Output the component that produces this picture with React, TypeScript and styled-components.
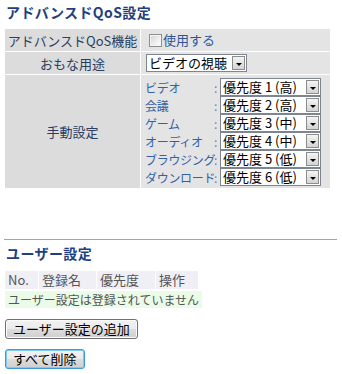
import React from "react";
import styled, { createGlobalStyle } from "styled-components";

const Global = createGlobalStyle`
  html, body { margin: 0; padding: 0; background: #fff; }
  body {
    font-family: "Noto Sans CJK JP", "Noto Sans", sans-serif;
    font-size: 13px;
    color: #333;
  }
`;

const Page = styled.div`
  width: 342px;
  height: 374px;
  overflow: hidden;
  padding-top: 3px;
  box-sizing: border-box;
`;

const Title = styled.h2`
  margin: 0 0 0 6px;
  height: 25px;
  font-size: 14px;
  line-height: 18px;
  font-weight: bold;
  letter-spacing: 0.4px;
  color: #1f3f7f;
`;

const SettingsGrid = styled.div`
  margin-left: 4px;
  display: grid;
  grid-template-columns: 135px 189px;
  grid-template-rows: 22px 22px 113px;
  gap: 1px;
  padding: 1px;
  width: max-content;
  background: #fff;
`;

const LabelCell = styled.div`
  background: #dcdcdc;
  color: #2a3d62;
  font-size: 13px;
  display: flex;
  align-items: center;
  justify-content: center;
  white-space: nowrap;
`;

const ValueCell = styled.div<{ $pad?: number }>`
  background: #e4e4e4;
  display: flex;
  align-items: center;
  padding-left: ${(p) => p.$pad ?? 5}px;
  box-sizing: border-box;
`;

const Check = styled.input`
  appearance: none;
  margin: 0 1px 0 3px;
  width: 13px;
  height: 13px;
  box-sizing: border-box;
  border: 1px solid #8e8f8f;
  background: linear-gradient(135deg, #d2d2d2 0%, #f4f4f4 70%, #fff 100%);
  box-shadow: inset 0 0 0 1px #f4f4f4;
`;

const CheckText = styled.label`
  color: #2f5597;
  font-size: 13px;
  line-height: 16px;
`;

const SelectBox = styled.span<{ $w: number }>`
  display: inline-flex;
  align-items: center;
  width: ${(p) => p.$w}px;
  height: 18px;
  box-sizing: border-box;
  border: 1px solid #7f8590;
  background: #fff;
`;

const NativeSelect = styled.select`
  appearance: none;
  -webkit-appearance: none;
  border: 0;
  outline: none;
  background: transparent;
  font-family: inherit;
  font-size: 13px;
  color: #000;
  flex: 1;
  min-width: 0;
  padding: 0 0 0 2px;
  height: 16px;
  line-height: 16px;
`;

const Arrow = styled.span`
  width: 13px;
  height: 14px;
  margin-right: 1px;
  box-sizing: border-box;
  border: 1px solid #8c8c8c;
  background: linear-gradient(#f4f4f4, #d4d4d4);
  display: flex;
  align-items: flex-end;
  justify-content: center;
  padding-bottom: 3px;
  &::after {
    content: "";
    border-left: 3.5px solid transparent;
    border-right: 3.5px solid transparent;
    border-top: 3.5px solid #000;
  }
`;

const ManualList = styled.div`
  align-self: stretch;
  padding-top: 3px;
  display: grid;
  grid-template-columns: 69px 6px 101px;
  grid-auto-rows: 18px;
  align-items: center;
`;

const ItemLabel = styled.span`
  font-size: 12px;
  color: #3461a6;
  white-space: nowrap;
  letter-spacing: -0.3px;
`;

const Colon = styled.span`
  font-size: 12px;
  color: #6a86b4;
`;

const Rule = styled.hr`
  margin: 50px 0 0 4px;
  width: 333px;
  height: 0;
  border: 0;
  border-top: 1px solid #a5a5a5;
`;

const SubTitle = styled.h3`
  margin: 4px 0 0 6px;
  font-size: 14px;
  line-height: 18px;
  font-weight: bold;
  letter-spacing: 0.4px;
  color: #1f3f7f;
`;

const HeaderRow = styled.div`
  margin: 9px 0 0 5px;
  display: grid;
  grid-template-columns: 33px 57px 58px 42px;
  gap: 1px;
  width: max-content;
`;

const HeadCell = styled.div`
  background: #efeff5;
  color: #555;
  font-size: 13px;
  height: 18px;
  line-height: 18px;
  padding-left: 3px;
  white-space: nowrap;
`;

const Empty = styled.div`
  margin: 2px 0 0 5px;
  display: inline-block;
  background: #eafbe7;
  color: #555;
  font-size: 12px;
  height: 17px;
  line-height: 17px;
  padding: 0 3px 0 3px;
  white-space: nowrap;
`;

const ButtonRow = styled.div<{ $top: number }>`
  margin: ${(p) => p.$top}px 0 0 5px;
`;

const Button = styled.button<{ $focused?: boolean }>`
  font-family: inherit;
  font-size: 13px;
  color: #000;
  height: 20px;
  line-height: 16px;
  padding: 0 7px;
  border-radius: 3px;
  border: 1px solid ${(p) => (p.$focused ? "#3c9ad8" : "#707070")};
  background: linear-gradient(#f2f2f2 0%, #ebebeb 50%, #dddddd 50%, #cfcfcf 100%);
  box-shadow: inset 0 0 0 1px ${(p) => (p.$focused ? "#7fcbf0" : "#fbfbfb")};
  cursor: pointer;
`;

const priorities = [
  ["ビデオ", "優先度 1 (高)"],
  ["会議", "優先度 2 (高)"],
  ["ゲーム", "優先度 3 (中)"],
  ["オーディオ", "優先度 4 (中)"],
  ["ブラウジング", "優先度 5 (低)"],
  ["ダウンロード", "優先度 6 (低)"],
];

const allOptions = [
  "優先度 1 (高)",
  "優先度 2 (高)",
  "優先度 3 (中)",
  "優先度 4 (中)",
  "優先度 5 (低)",
  "優先度 6 (低)",
];

function Select({ value, options, width }: { value: string; options: string[]; width: number }) {
  return (
    <SelectBox $w={width}>
      <NativeSelect defaultValue={value}>
        {options.map((o) => (
          <option key={o}>{o}</option>
        ))}
      </NativeSelect>
      <Arrow />
    </SelectBox>
  );
}

export default function App() {
  return (
    <Page>
      <Global />
      <Title>アドバンスドQoS設定</Title>
      <SettingsGrid>
        <LabelCell>アドバンスドQoS機能</LabelCell>
        <ValueCell>
          <Check type="checkbox" id="qos" />
          <CheckText htmlFor="qos">使用する</CheckText>
        </ValueCell>
        <LabelCell>おもな用途</LabelCell>
        <ValueCell>
          <Select value="ビデオの視聴" options={["ビデオの視聴", "ゲーム", "その他"]} width={101} />
        </ValueCell>
        <LabelCell>手動設定</LabelCell>
        <ValueCell $pad={4}>
          <ManualList>
            {priorities.map(([label, val]) => (
              <React.Fragment key={label}>
                <ItemLabel>{label}</ItemLabel>
                <Colon>:</Colon>
                <Select value={val} options={allOptions} width={101} />
              </React.Fragment>
            ))}
          </ManualList>
        </ValueCell>
      </SettingsGrid>
      <Rule />
      <SubTitle>ユーザー設定</SubTitle>
      <HeaderRow>
        <HeadCell>No.</HeadCell>
        <HeadCell>登録名</HeadCell>
        <HeadCell>優先度</HeadCell>
        <HeadCell>操作</HeadCell>
      </HeaderRow>
      <Empty>ユーザー設定は登録されていません</Empty>
      <ButtonRow $top={10}>
        <Button>ユーザー設定の追加</Button>
      </ButtonRow>
      <ButtonRow $top={10}>
        <Button $focused>すべて削除</Button>
      </ButtonRow>
    </Page>
  );
}
